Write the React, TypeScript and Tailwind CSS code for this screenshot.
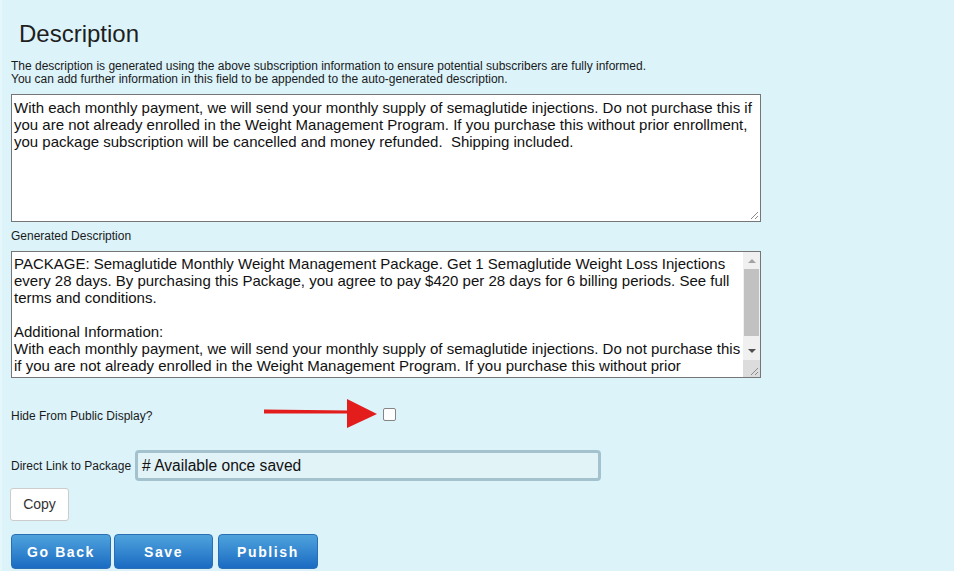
const userText = [
  'With each monthly payment, we will send your monthly supply of semaglutide injections. Do not purchase this if',
  'you are not already enrolled in the Weight Management Program. If you purchase this without prior enrollment,',
  'you package subscription will be cancelled and money refunded.\u00a0 Shipping included.',
];

const generatedText = [
  'PACKAGE: Semaglutide Monthly Weight Management Package. Get 1 Semaglutide Weight Loss Injections',
  'every 28 days. By purchasing this Package, you agree to pay $420 per 28 days for 6 billing periods. See full',
  'terms and conditions.',
  '\u00a0',
  'Additional Information:',
  'With each monthly payment, we will send your monthly supply of semaglutide injections. Do not purchase this',
  'if you are not already enrolled in the Weight Management Program. If you purchase this without prior',
  'enrollment, your package subscription will be cancelled and money refunded.  Shipping included.',
];

function Grip() {
  return (
    <svg width="10" height="10" viewBox="0 0 10 10" className="absolute right-[1px] bottom-[1px]">
      <line x1="9" y1="2" x2="2" y2="9" stroke="#8a8a8a" strokeWidth="1" />
      <line x1="9" y1="6" x2="6" y2="9" stroke="#8a8a8a" strokeWidth="1" />
    </svg>
  );
}

export default function App() {
  const blueBtn =
    'h-[35px] rounded-[4px] border border-[#2a6fb5] bg-gradient-to-b from-[#4ea3dc] to-[#1a6bc2] text-white text-[14px] font-bold tracking-[1.6px] pt-[2px]';

  return (
    <div className="min-h-[571px] bg-[#dcf3fa] border-l-[2px] border-[#e6f7fc] pl-[9px] pr-4 text-[#222] font-['Liberation_Sans',Arial,sans-serif] overflow-hidden">
      <h2 className="pt-[20px] pl-[8px] text-[24px] leading-[28px] text-[#1e1e1e]">Description</h2>

      <div className="mt-[12px] text-[12px] leading-[13px] text-[#1a1a1a]">
        <div>The description is generated using the above subscription information to ensure potential subscribers are fully informed.</div>
        <div>You can add further information in this field to be appended to the auto-generated description.</div>
      </div>

      <div className="relative mt-[8px] w-[750px] h-[128px] bg-white border border-[#767676] px-[2px] pt-[4px] text-[15px] leading-[17px] text-[#111] whitespace-nowrap overflow-hidden">
        {userText.map((l, i) => (
          <div key={i}>{l}</div>
        ))}
        <Grip />
      </div>

      <div className="mt-[8px] text-[12px] leading-[13px] text-[#1a1a1a]">Generated Description</div>

      <div className="relative mt-[8px] w-[750px] h-[127px] bg-white border border-[#767676] flex overflow-hidden">
        <div className="flex-1 px-[2px] pt-[3px] text-[15px] leading-[17px] text-[#111] whitespace-nowrap overflow-hidden">
          {generatedText.map((l, i) => (
            <div key={i}>{l}</div>
          ))}
        </div>
        <div className="w-[17px] bg-[#f0f0f0] flex flex-col items-center">
          <div className="h-[17px] flex items-center justify-center">
            <svg width="8" height="5" viewBox="0 0 8 5"><path d="M0 5 L4 1 L8 5 Z" fill="#a3a3a3" /></svg>
          </div>
          <div className="w-[15px] h-[67px] bg-[#c1c1c1]" />
          <div className="flex-1" />
          <div className="h-[17px] flex items-center justify-center">
            <svg width="8" height="5" viewBox="0 0 8 5"><path d="M0 0 L4 4 L8 0 Z" fill="#505050" /></svg>
          </div>
          <div className="h-[17px] w-full bg-[#dcdcdc]" />
        </div>
        <Grip />
      </div>

      <div className="relative mt-[26px] flex items-center h-[20px]">
        <span className="w-[372px] pt-[4px] text-[12px] text-[#1a1a1a]">Hide From Public Display?</span>
        <span className="w-[13px] h-[13px] bg-white border border-[#858585] rounded-[2px]" />
        <svg className="absolute left-[253px] top-[-5px]" width="115" height="31" viewBox="0 0 115 31">
          <path d="M0 10.5 L85 11.5 L85 14.5 L0 14.5 Z" fill="#e31c1c" />
          <path d="M83 0 L113 15 L83 29 Z" fill="#e31c1c" />
        </svg>
      </div>

      <div className="mt-[26px] flex items-center">
        <span className="w-[124px] text-[12px] text-[#1a1a1a]">Direct Link to Package</span>
        <div className="w-[466px] h-[31px] border-[3px] border-[#a4c2ce] rounded-[4px] bg-[#e2f3f8] pl-[4px] flex items-center text-[15.6px] text-[#111]">
          # Available once saved
        </div>
      </div>

      <button className="mt-[7px] -ml-[1px] w-[59px] h-[33px] bg-white border border-[#cccccc] rounded-[3px] text-[14px] text-[#333] block">
        Copy
      </button>

      <div className="mt-[13px] flex">
        <button className={`${blueBtn} w-[100px]`}>Go Back</button>
        <button className={`${blueBtn} w-[99px] ml-[3px]`}>Save</button>
        <button className={`${blueBtn} w-[100px] ml-[5px]`}>Publish</button>
      </div>
    </div>
  );
}
